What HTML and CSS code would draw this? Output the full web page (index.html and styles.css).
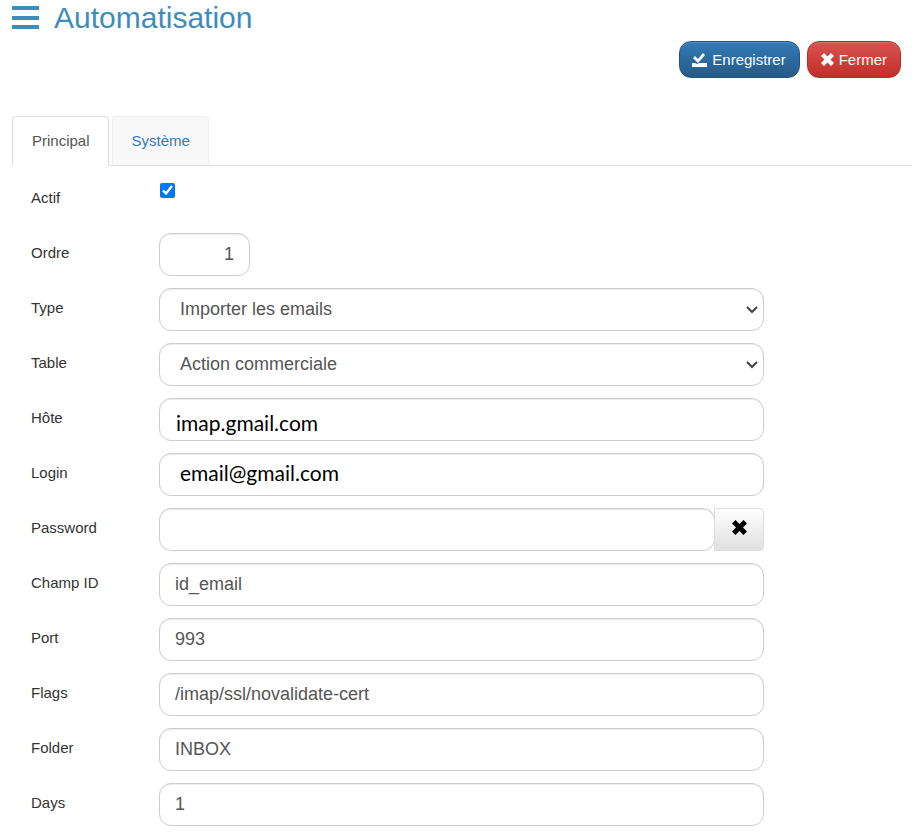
FILE: index.html
```html
<!DOCTYPE html>
<html lang="fr">
<head>
    <meta charset="UTF-8">
    <meta name="viewport" content="width=device-width, initial-scale=1.0">
    <title>Automatisation</title>
    <link rel="stylesheet" href="styles.css">
</head>
<body>
    <!-- Title -->
    <header class="page-header">
        <svg class="menu-icon" viewBox="0 0 27 24" aria-hidden="true">
            <path d="M0 0h27v4H0zM0 10h27v4H0zM0 19h27v4H0z"/>
        </svg>
        <h1>Automatisation</h1>
    </header>

    <!-- Actions -->
    <div class="toolbar">
        <button type="submit" form="automationForm" class="btn btn-primary">
            <svg class="save-icon" viewBox="0 0 15 14" aria-hidden="true">
                <path d="M0 10h3l2 1 2-1h8v4H0zM1 5l2-2 3 3 5-6 2 2-7 8z"/>
            </svg>
            Enregistrer
        </button>
        <button type="button" class="btn btn-danger">
            <svg class="close-icon" viewBox="0 0 13 13" aria-hidden="true">
                <path d="M3 0l3.5 3.5L10 0l3 3-3.5 3.5L13 10l-3 3-3.5-3.5L3 13l-3-3 3.5-3.5L0 3z"/>
            </svg>
            Fermer
        </button>
    </div>

    <!-- Tabs -->
    <nav class="tabs">
        <a href="#principal" class="tab active">Principal</a>
        <a href="#systeme" class="tab">Système</a>
    </nav>

    <form id="automationForm" class="form">
        <div class="form-group">
            <label for="actif">Actif</label>
            <input type="checkbox" id="actif" name="actif" checked>
        </div>

        <div class="form-group">
            <label for="ordre">Ordre</label>
            <input type="text" id="ordre" name="ordre" class="form-control short" inputmode="numeric" value="1">
        </div>

        <div class="form-group">
            <label for="type">Type</label>
            <div class="select-wrap">
                <select id="type" name="type" class="form-control">
                    <option>Importer les emails</option>
                </select>
                <svg class="arrow" viewBox="0 0 12 8" aria-hidden="true"><path d="M1 1l5 5 5-5"/></svg>
            </div>
        </div>

        <div class="form-group">
            <label for="table">Table</label>
            <div class="select-wrap">
                <select id="table" name="table" class="form-control">
                    <option>Action commerciale</option>
                </select>
                <svg class="arrow" viewBox="0 0 12 8" aria-hidden="true"><path d="M1 1l5 5 5-5"/></svg>
            </div>
        </div>

        <!-- Mail account -->
        <div class="form-group">
            <label for="hote">Hôte</label>
            <input type="text" id="hote" name="hote" class="form-control account host" value="imap.gmail.com">
        </div>

        <div class="form-group">
            <label for="login">Login</label>
            <input type="text" id="login" name="login" class="form-control account login" value="email@gmail.com">
        </div>

        <div class="form-group">
            <label for="password">Password</label>
            <div class="input-group">
                <input type="password" id="password" name="password" class="form-control">
                <button type="button" class="btn-clear" aria-label="Effacer">
                    <svg class="clear-icon" viewBox="0 0 13 13" aria-hidden="true">
                        <path d="M3 0l3.5 3.5L10 0l3 3-3.5 3.5L13 10l-3 3-3.5-3.5L3 13l-3-3 3.5-3.5L0 3z"/>
                    </svg>
                </button>
            </div>
        </div>

        <div class="form-group">
            <label for="champ">Champ ID</label>
            <input type="text" id="champ" name="champ" class="form-control" value="id_email">
        </div>

        <div class="form-group">
            <label for="port">Port</label>
            <input type="text" id="port" name="port" class="form-control" value="993">
        </div>

        <div class="form-group">
            <label for="flags">Flags</label>
            <input type="text" id="flags" name="flags" class="form-control" value="/imap/ssl/novalidate-cert">
        </div>

        <div class="form-group">
            <label for="folder">Folder</label>
            <input type="text" id="folder" name="folder" class="form-control" value="INBOX">
        </div>

        <div class="form-group">
            <label for="days">Days</label>
            <input type="text" id="days" name="days" class="form-control" value="1">
        </div>
    </form>
</body>
</html>
```
FILE: styles.css
```css
* {
    box-sizing: border-box;
}
body {
    margin: 0;
    padding-left: 12px;
    font-family: "Liberation Sans", Arial, sans-serif;
    font-size: 15px;
    line-height: 20px;
    color: #333;
    background: #fff;
}
.page-header {
    display: flex;
    align-items: center;
    gap: 15px;
    height: 36px;
    color: #3c8dbc;
}
.page-header h1 {
    margin: 0;
    font-size: 30px;
    font-weight: normal;
    line-height: 36px;
}
.menu-icon {
    width: 27px;
    height: 24px;
    fill: currentColor;
}

/* Save and close buttons */
.toolbar {
    display: flex;
    justify-content: flex-end;
    gap: 7px;
    padding: 5px 11px 38px 0;
}
.btn {
    display: flex;
    align-items: center;
    gap: 5px;
    height: 37px;
    padding: 0 13px;
    border: 1px solid;
    border-radius: 12px;
    font-family: inherit;
    font-size: 15px;
    color: #fff;
    cursor: pointer;
    box-shadow: inset 0 1px 0 rgba(255, 255, 255, 0.15);
}
.btn-primary {
    padding: 0 13px 0 12px;
    border-color: #245580;
    background: linear-gradient(#337ab7, #265a88);
}
.btn-danger {
    border-color: #b92c28;
    background: linear-gradient(#d9534f, #c12e2a);
}
.save-icon {
    width: 15px;
    height: 14px;
    fill: currentColor;
}
.close-icon {
    width: 13px;
    height: 13px;
    fill: currentColor;
}

/* Tabs */
.tabs {
    display: flex;
    gap: 3px;
    border-bottom: 1px solid #ddd;
}
.tab {
    margin-bottom: -1px;
    padding: 14px 18px 14px 19px;
    border: 1px solid #eee;
    border-bottom-color: #ddd;
    border-radius: 4px 4px 0 0;
    background: #f8f8f8;
    color: #337ab7;
    text-decoration: none;
}
.tab.active {
    border-color: #ddd;
    border-bottom-color: #fff;
    background: #fff;
    color: #555;
}

/* Form rows */
.form {
    max-width: 752px;
    padding: 12px 0 0 19px;
}
.form-group {
    display: grid;
    grid-template-columns: 128px minmax(0, 1fr);
    align-items: start;
    min-height: 43px;
    margin-bottom: 12px;
}
.form-group label {
    padding-top: 10px;
}
input[type="checkbox"] {
    width: 15px;
    height: 15px;
    margin: 5px 0 0 1px;
    accent-color: #0075ff;
}
.form-control {
    width: 100%;
    height: 43px;
    padding: 0 15px;
    border: 1px solid #ccc;
    border-radius: 12px;
    background: #fff;
    font-family: inherit;
    font-size: 18px;
    color: #555;
    box-shadow: inset 0 1px 1px rgba(0, 0, 0, 0.075);
}
.form-control.short {
    width: 91px;
    text-align: right;
}
.form-control.account {
    font-family: Lato, sans-serif;
    font-size: 21px;
    color: #000;
}
.form-control.host {
    padding-top: 6px;
    padding-left: 16px;
}
.form-control.login {
    padding-bottom: 4px;
    padding-left: 20px;
}
.select-wrap {
    position: relative;
}
select.form-control {
    display: block;
    padding: 0 32px 2px 20px;
    appearance: none;
}
.arrow {
    position: absolute;
    top: 18px;
    right: 6px;
    width: 12px;
    height: 8px;
    fill: none;
    stroke: #444;
    stroke-width: 2;
    pointer-events: none;
}

/* Password with its clear button */
.input-group {
    display: flex;
}
.input-group .form-control {
    flex: 1;
    min-width: 0;
}
.btn-clear {
    display: flex;
    justify-content: center;
    width: 50px;
    height: 43px;
    margin-left: -1px;
    padding: 11px 0 0;
    border: 1px solid #ddd;
    border-radius: 0 4px 4px 0;
    background: linear-gradient(#fff, #e0e0e0);
    cursor: pointer;
}
.clear-icon {
    width: 15px;
    height: 15px;
    fill: #000;
}
```
